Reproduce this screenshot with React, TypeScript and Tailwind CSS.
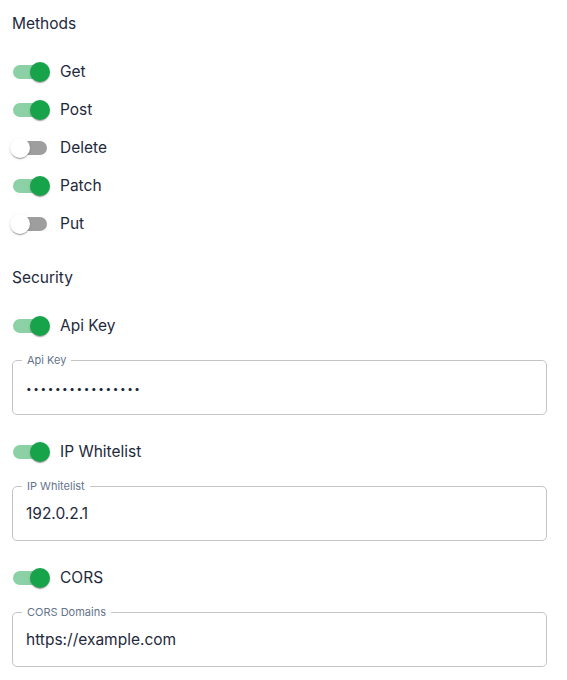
import React from "react";

function Toggle({ on, label }: { on: boolean; label: string }) {
  return (
    <div className="flex items-center h-[38px] -ml-[11px]">
      <div className="relative w-[58px] h-[38px] shrink-0">
        <div
          className={
            on
              ? "absolute left-[12px] top-[12px] w-[34px] h-[14px] rounded-[7px] bg-[#8bd1a5]"
              : "absolute left-[12px] top-[12px] w-[34px] h-[14px] rounded-[7px] bg-[#9e9e9e]"
          }
        />
        <div
          className={
            on
              ? "absolute left-[29px] top-[9px] w-[20px] h-[20px] rounded-full bg-[#16a34a] shadow-[0_2px_1px_-1px_rgba(0,0,0,0.2),0_1px_1px_0_rgba(0,0,0,0.14),0_1px_3px_0_rgba(0,0,0,0.12)]"
              : "absolute left-[9px] top-[9px] w-[20px] h-[20px] rounded-full bg-white shadow-[0_2px_1px_-1px_rgba(0,0,0,0.2),0_1px_1px_0_rgba(0,0,0,0.14),0_1px_3px_0_rgba(0,0,0,0.12)]"
          }
        />
      </div>
      <span className="ml-[1px] text-[15.5px] leading-[22px] text-[#1e293b]">{label}</span>
    </div>
  );
}

function Field({
  label,
  value,
  secret,
}: {
  label: string;
  value: string;
  secret?: boolean;
}) {
  return (
    <div className="relative h-[55px] rounded-[5px] border border-[#c4c4c4] flex items-center px-[13px]">
      <span className="absolute -top-[8px] left-[9px] bg-white px-[5px] text-[11px] leading-[14px] text-[#64748b]">
        {label}
      </span>
      <input
        type="text"
        value={value}
        readOnly
        className={
          secret
            ? "w-full bg-transparent outline-none text-[10px] tracking-[1.6px] leading-[22px] text-[#1e293b] font-['Inter',sans-serif]"
            : "w-full bg-transparent outline-none text-[15.5px] leading-[22px] text-[#1e293b] font-['Inter',sans-serif]"
        }
      />
    </div>
  );
}

export default function App() {
  return (
    <div className="bg-white w-[567px] h-[680px] pl-[12px] pr-[20px] pt-[13px] font-['Inter',sans-serif]">
      <div className="flex flex-col">
        <h2 className="text-[15.5px] leading-[22px] text-[#1e293b] font-normal">Methods</h2>
        <div className="mt-[18px] flex flex-col">
          <Toggle on label="Get" />
          <Toggle on label="Post" />
          <Toggle on={false} label="Delete" />
          <Toggle on label="Patch" />
          <Toggle on={false} label="Put" />
        </div>
        <h2 className="mt-[24px] text-[15.5px] leading-[22px] text-[#1e293b] font-normal">Security</h2>
        <div className="mt-[18px]">
          <Toggle on label="Api Key" />
        </div>
        <div className="mt-[15px]">
          <Field label="Api Key" value="••••••••••••••••" secret />
        </div>
        <div className="mt-[18px]">
          <Toggle on label="IP Whitelist" />
        </div>
        <div className="mt-[15px]">
          <Field label="IP Whitelist" value="192.0.2.1" />
        </div>
        <div className="mt-[18px]">
          <Toggle on label="CORS" />
        </div>
        <div className="mt-[15px]">
          <Field label="CORS Domains" value="https://example.com" />
        </div>
      </div>
    </div>
  );
}
